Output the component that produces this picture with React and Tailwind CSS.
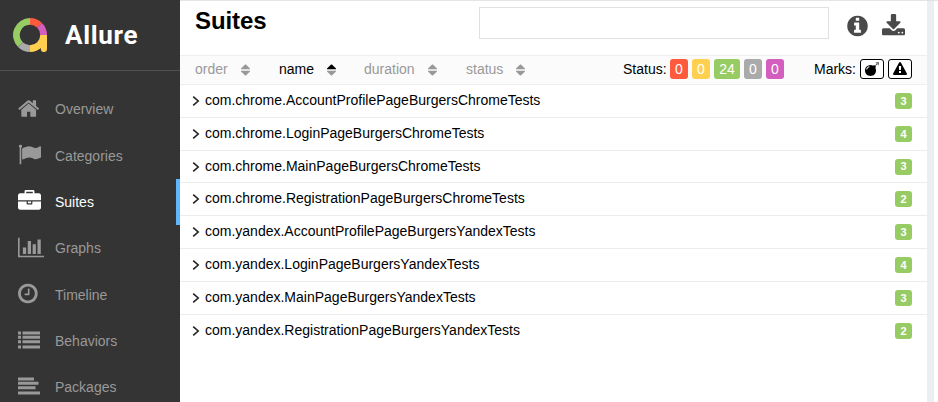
const glyphs = {
  home: { box: '64 0 1792 1792', d: 'M1472 992v480q0 26-19 45t-45 19h-384v-384h-256v384h-384q-26 0-45-19t-19-45v-480q0-1 .5-3t.5-3l575-474 575 474q1 2 1 6zm223-69l-62 74q-8 9-21 11h-3q-13 0-21-7l-692-577-692 577q-12 8-24 7-13-2-21-11l-62-74q-8-10-7-23.5t11-21.5l719-599q32-26 76-26t76 26l244 204v-195q0-14 9-23t23-9h192q14 0 23 9t9 23v408l219 182q10 8 11 21.5t-7 23.5z' },
  flag: { box: '0 0 1792 1792', d: 'M320 256q0 72-64 110v1266q0 13-9.5 22.5t-22.5 9.5h-64q-13 0-22.5-9.5t-9.5-22.5v-1266q-64-38-64-110 0-53 37.5-90.5t90.5-37.5 90.5 37.5 37.5 90.5zm1472 64v763q0 25-12.5 38.5t-39.5 27.5q-215 116-369 116-61 0-123.5-22t-108.5-48-115.5-48-142.5-22q-192 0-464 146-17 9-33 9-26 0-45-19t-19-45v-742q0-32 31-55 21-14 79-43 236-120 421-120 107 0 200 29t219 88q38 19 88 19 54 0 117.5-21t110-47 88-47 54.5-21q26 0 45 19t19 45z' },
  briefcase: { box: '0 0 1792 1792', d: 'M640 256h512v-128h-512v128zm1152 640v480q0 66-47 113t-113 47h-1472q-66 0-113-47t-47-113v-480h672v160q0 26 19 45t45 19h320q26 0 45-19t19-45v-160h672zm-768 0v128h-256v-128h256zm768-480v384h-1792v-384q0-66 47-113t113-47h352v-160q0-40 28-68t68-28h576q40 0 68 28t28 68v160h352q66 0 113 47t47 113z' },
  chart: { box: '0 0 2048 1792', d: 'M640 896v512h-256v-512h256zm384-512v1024h-256v-1024h256zm1024 1152v128h-2048v-1536h128v1408h1920zm-640-896v768h-256v-768h256zm384-384v1152h-256v-1152h256z' },
  clock: { box: '128 0 1792 1792', d: 'M1024 544v448q0 14-9 23t-23 9h-320q-14 0-23-9t-9-23v-64q0-14 9-23t23-9h224v-352q0-14 9-23t23-9h64q14 0 23 9t9 23zm416 352q0-148-73-273t-198-198-273-73-273 73-198 198-73 273 73 273 198 198 273 73 273-73 198-198 73-273zm224 0q0 209-103 385.5t-279.5 279.5-385.5 103-385.5-103-279.5-279.5-103-385.5 103-385.5 279.5-279.5 385.5-103 385.5 103 279.5 279.5 103 385.5z' },
  list: { box: '0 0 23 23', d: 'M0 2.500h3v3H0zM4.500 2.500H22v3H4.500zM0 6.800h3v3H0zM4.500 6.800H22v3H4.500zM0 11.300h3v3H0zM4.500 11.300H22v3H4.500zM0 16.500h3v3H0zM4.500 16.500H22v3H4.500z' },
  align: { box: '0 0 23 23', d: 'M0 2.500h16v3H0zM0 6.800h20.500v3H0zM0 11.300h17.500v3H0zM0 16.500h22v3H0z' },
  info: { box: '128 0 1536 1792', d: 'M1152 1376v-160q0-14-9-23t-23-9h-96v-512q0-14-9-23t-23-9h-320q-14 0-23 9t-9 23v160q0 14 9 23t23 9h96v320h-96q-14 0-23 9t-9 23v160q0 14 9 23t23 9h448q14 0 23-9t9-23zm-128-896v-160q0-14-9-23t-23-9h-192q-14 0-23 9t-9 23v160q0 14 9 23t23 9h192q14 0 23-9t9-23zm640 416q0 209-103 385.5t-279.5 279.5-385.5 103-385.5-103-279.5-279.5-103-385.5 103-385.5 279.5-279.5 385.5-103 385.5 103 279.5 279.5 103 385.5z' },
  download: { box: '64 0 1664 1792', d: 'M1344 1344q0-26-19-45t-45-19-45 19-19 45 19 45 45 19 45-19 19-45zm256 0q0-26-19-45t-45-19-45 19-19 45 19 45 45 19 45-19 19-45zm128-224v320q0 40-28 68t-68 28h-1472q-40 0-68-28t-28-68v-320q0-40 28-68t68-28h465l135 136q58 56 136 56t136-56l136-136h464q40 0 68 28t28 68zm-325-569q17 41-14 70l-448 448q-18 19-45 19t-45-19l-448-448q-31-29-14-70 17-39 59-39h256v-448q0-26 19-45t45-19h256q26 0 45 19t19 45v448h256q42 0 59 39z' },
  bomb: { box: '0 0 1792 1792', d: 'M571 589q-10-25-34-35t-49 0q-108 44-191 127t-127 191q-10 25 0 49t35 34q13 5 24 5 42 0 60-40 34-84 98.5-148.5t148.5-98.5q25-11 35-35t0-49zm942-356l46 46-244 243 68 68q19 19 19 45.5t-19 45.5l-64 64q89 161 89 343 0 143-55.5 273.5t-150 225-225 150-273.5 55.5-273.5-55.5-225-150-150-225-55.5-273.5 55.5-273.5 150-225 225-150 273.5-55.5q182 0 343 89l64-64q19-19 45.5-19t45.5 19l68 68zm8-56q-10 10-22 10-13 0-23-10l-91-90q-9-10-9-23t9-23q10-9 23-9t23 9l90 91q10 9 10 22.5t-10 22.5zm230 230q-11 9-23 9t-23-9l-90-91q-10-9-10-22.5t10-22.5q9-10 22.5-10t22.5 10l91 90q9 10 9 23t-9 23zm41-183q0 14-9 23t-23 9h-96q-14 0-23-9t-9-23 9-23 23-9h96q14 0 23 9t9 23zm-192-192v96q0 14-9 23t-23 9-23-9-9-23v-96q0-14 9-23t23-9 23 9 9 23zm151 55l-91 90q-10 10-22 10-13 0-23-10-10-9-10-22.5t10-22.5l90-91q10-9 23-9t23 9q9 10 9 23t-9 23z' },
  warning: { box: '0 0 1792 1792', d: 'M1024 1375v-190q0-14-9.5-23.5t-22.5-9.5h-192q-13 0-22.5 9.5t-9.5 23.5v190q0 14 9.5 23.5t22.5 9.5h192q13 0 22.5-9.5t9.5-23.5zm-2-374l18-459q0-12-10-19-13-11-24-11h-220q-11 0-24 11-10 7-10 21l17 457q0 10 10 16.5t24 6.5h185q14 0 23.5-6.5t10.5-16.5zm-14-934l768 1408q35 63-2 126-17 29-46.5 46t-63.5 17h-1536q-34 0-63.5-17t-46.5-46q-37-63-2-126l768-1408q17-31 47-49t65-18 65 18 47 49z' },
};

function Icon({ name, className }) {
  const { box, d } = glyphs[name];
  return (
    <svg viewBox={box} fill="currentColor" className={`shrink-0 ${className}`}>
      <path d={d} />
    </svg>
  );
}

function Logo() {
  return (
    <svg viewBox="0 0 34 34" className="h-[34px] w-[34px] shrink-0" fill="none" strokeWidth="6.800">
      <path d="M7.400 26.600A13.600 13.600 0 0 1 17 3.400" stroke="#97cc64" />
      <path d="M17 3.400A13.600 13.600 0 0 1 26.600 7.400" stroke="#fd5a3e" />
      <path d="M26.600 7.400A13.600 13.600 0 0 1 30.600 17" stroke="#d35ebe" />
      <path d="M17 30.600A13.600 13.600 0 0 1 7.400 26.600" stroke="#aaa" />
      <path d="M30.600 17A13.600 13.600 0 0 1 17 30.600" stroke="#ffd050" />
      <path d="M27.800 17H34V31a3.100 3.100 0 0 1-6.200 0z" fill="#ffd050" strokeWidth="0" />
    </svg>
  );
}

const nav = [
  { label: 'Overview', icon: 'home', size: 'h-[23px] w-[23px]', row: 'h-[46px]' },
  { label: 'Categories', icon: 'flag', size: 'h-[23px] w-[23px]', row: 'h-[47px]' },
  { label: 'Suites', icon: 'briefcase', size: 'h-[23px] w-[23px]', row: 'h-[46px]', active: true },
  { label: 'Graphs', icon: 'chart', size: 'h-[23px] w-[26px]', row: 'h-[46px]' },
  { label: 'Timeline', icon: 'clock', size: 'h-[23px] w-[23px]', row: 'h-[47px]' },
  { label: 'Behaviors', icon: 'list', size: 'h-[23px] w-[23px]', row: 'h-[46px]' },
  { label: 'Packages', icon: 'align', size: 'h-[23px] w-[23px]', row: 'h-[46px]' },
];

const suites = [
  ['com.chrome.AccountProfilePageBurgersChromeTests', 3, 'h-[33px]'],
  ['com.chrome.LoginPageBurgersChromeTests', 4, 'h-[33px]'],
  ['com.chrome.MainPageBurgersChromeTests', 3, 'h-8'],
  ['com.chrome.RegistrationPageBurgersChromeTests', 2, 'h-[33px]'],
  ['com.yandex.AccountProfilePageBurgersYandexTests', 3, 'h-[33px]'],
  ['com.yandex.LoginPageBurgersYandexTests', 4, 'h-[33px]'],
  ['com.yandex.MainPageBurgersYandexTests', 3, 'h-[33px]'],
  ['com.yandex.RegistrationPageBurgersYandexTests', 2, 'h-[33px] border-transparent'],
];

const sorters = [
  { label: 'order', width: 'w-[84px]', gap: 'w-[46px]' },
  { label: 'name', width: 'w-[85px]', gap: 'w-12', active: true },
  { label: 'duration', width: 'w-[102px]', gap: 'w-16' },
  { label: 'status', width: 'w-20', gap: 'w-[50px]' },
];

const statuses = [
  ['0', 'w-[18px] bg-[#fd5a3e]'],
  ['0', 'w-[18px] bg-[#ffd050]'],
  ['24', 'w-[26px] bg-[#97cc64]'],
  ['0', 'w-[18px] bg-[#aaa]'],
  ['0', 'w-[18px] bg-[#d35ebe]'],
];

function Sidebar() {
  return (
    <aside className="flex w-[180px] shrink-0 flex-col bg-[#343434]">
      <div className="flex h-[71px] shrink-0 items-center border-b border-[#505050] pl-[13px]">
        <Logo />
        <span className="ml-[18px] text-[26px] leading-none font-bold tracking-[0.7px] text-white font-['Roboto',sans-serif]">Allure</span>
      </div>
      <nav className="pt-[15px]">
        {nav.map((n) => (
          <a key={n.label} className={`flex items-center pl-[18px] ${n.row} ${n.active ? 'border-r-4 border-[#61b6fb] text-white' : 'text-[#999]'}`}>
            <span className="flex w-[37px] pb-0.5"><Icon name={n.icon} className={n.size} /></span>
            <span className="text-sm">{n.label}</span>
          </a>
        ))}
      </nav>
    </aside>
  );
}

export default function App() {
  return (
    <div className="flex h-[402px] w-[938px] overflow-hidden bg-white font-['Liberation_Sans',Arial,sans-serif] text-sm text-black">
      <Sidebar />
      <main className="flex w-[747px] shrink-0 flex-col border-t border-[#e5e5e5]">
        <header className="flex h-[54px] shrink-0 pl-[15px]">
          <h1 className="w-[284px] pt-[5px] text-[24px] leading-[30px] font-bold tracking-[-0.1px]">Suites</h1>
          <input aria-label="Search" className="mt-1.5 h-8 w-[350px] border border-[#e0e0e0] outline-none" />
          <Icon name="info" className="mt-[13px] ml-[18px] h-6 w-[21px] text-[#4a4a4a]" />
          <Icon name="download" className="mt-[13px] ml-3.5 h-[25px] w-[23px] text-[#4a4a4a]" />
        </header>
        <div className="flex h-[30px] shrink-0 items-center border-y border-[#eceff1] bg-[#fbfbfb] pb-0.5 pl-[15px]">
          {sorters.map((s) => (
            <div key={s.label} className={`flex shrink-0 items-center ${s.width} ${s.active ? 'text-black' : 'text-[#999]'}`}>
              <span className={s.gap}>{s.label}</span>
              <svg viewBox="0 0 9 12" className="mt-0.5 h-3 w-[9px] shrink-0">
                <path d="M0 5.200V4.600L4.100 .5h.8L9 4.600v.6z" fill="currentColor" />
                <path d="M0 6.800V7.400L4.100 11.500h.8L9 7.400v-.6z" fill="#999" />
              </svg>
            </div>
          ))}
          <span className="ml-[77px] w-[47px]">Status:</span>
          <div className="flex gap-1">
            {statuses.map(([n, cls], i) => (
              <span key={i} className={`flex h-5 items-center justify-center rounded-[3px] text-white ${cls}`}>{n}</span>
            ))}
          </div>
          <span className="ml-[30px] w-[46px]">Marks:</span>
          <div className="flex gap-1">
            <span className="flex h-5 w-6 items-center justify-center rounded-[3px] border border-black bg-white"><Icon name="bomb" className="h-3.5 w-3.5" /></span>
            <span className="flex h-5 w-6 items-center justify-center rounded-[3px] border border-black bg-white"><Icon name="warning" className="h-3.5 w-3.5" /></span>
          </div>
        </div>
        {suites.map(([name, count, row]) => (
          <div key={name} className={`flex shrink-0 items-center border-b border-[#ececec] pr-[15px] pl-3 ${row}`}>
            <svg viewBox="0 0 8 10" className="mr-[5px] h-2.5 w-2" fill="none" stroke="#222" strokeWidth="1.600">
              <path d="M1.200 .6L6.200 5 1.200 9.400" />
            </svg>
            <span className="flex-1 pb-0.5">{name}</span>
            <span className="flex h-4 w-[17px] items-center justify-center rounded-[3px] bg-[#97cc64] pt-px text-[11px] font-bold text-white">{count}</span>
          </div>
        ))}
      </main>
      <div className="w-[7px] shrink-0 border-t border-[#e0e0e0] bg-[#eceff1]" />
      <div className="flex-1 border-t border-[#e5e5e5]" />
    </div>
  );
}
